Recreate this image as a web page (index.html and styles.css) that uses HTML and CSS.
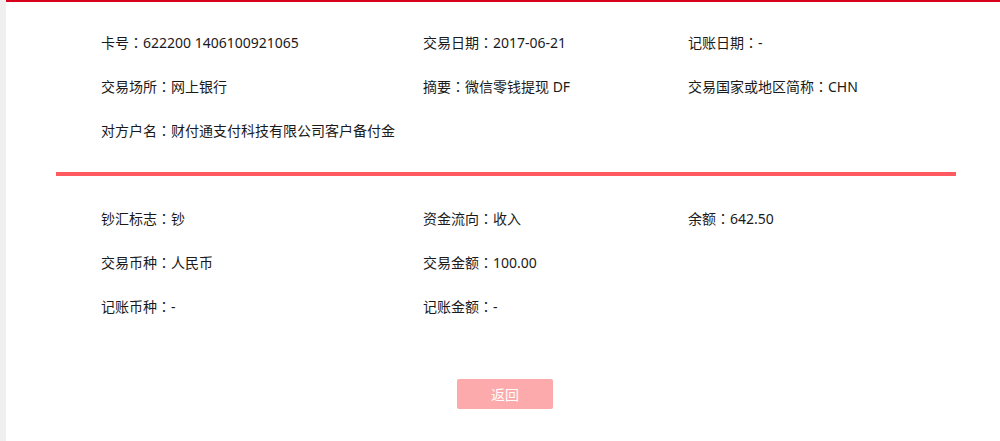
FILE: index.html
```html
<!DOCTYPE html>
<html lang="zh-CN">
<head>
  <meta charset="UTF-8" />
  <title>交易明细</title>
  <link rel="stylesheet" href="styles.css">
</head>
<body>
  <div class="page">
    <div class="info-grid">
      <div class="item">卡号<span class="colon" lang="zh-TW">：</span>622200 1406100921065</div>
      <div class="item">交易日期<span class="colon" lang="zh-TW">：</span>2017-06-21</div>
      <div class="item">记账日期<span class="colon" lang="zh-TW">：</span>-</div>

      <div class="item">交易场所<span class="colon" lang="zh-TW">：</span>网上银行</div>
      <div class="item">摘要<span class="colon" lang="zh-TW">：</span>微信零钱提现 DF</div>
      <div class="item">交易国家或地区简称<span class="colon" lang="zh-TW">：</span>CHN</div>

      <div class="item">对方户名<span class="colon" lang="zh-TW">：</span>财付通支付科技有限公司客户备付金</div>
    </div>

    <div class="divider"></div>

    <div class="info-grid">
      <div class="item">钞汇标志<span class="colon" lang="zh-TW">：</span>钞</div>
      <div class="item">资金流向<span class="colon" lang="zh-TW">：</span>收入</div>
      <div class="item">余额<span class="colon" lang="zh-TW">：</span>642.50</div>

      <div class="item">交易币种<span class="colon" lang="zh-TW">：</span>人民币</div>
      <div class="item">交易金额<span class="colon" lang="zh-TW">：</span>100.00</div>
      <div class="item"></div>

      <div class="item">记账币种<span class="colon" lang="zh-TW">：</span>-</div>
      <div class="item">记账金额<span class="colon" lang="zh-TW">：</span>-</div>
    </div>

    <div class="actions">
      <button class="back-btn">返回</button>
    </div>
  </div>
</body>
</html>
```

FILE: styles.css
```css
body, html {
  margin: 0;
  padding: 0;
  height: 100%;
  background-color: #f0f0f0;
  font-family: "Noto Sans", "Noto Sans CJK SC", sans-serif;
  font-size: 14px;
  color: #1a1a1a;
}

.page {
  margin-left: 6px;
  min-height: 100%;
  background-color: #fff;
  border-top: 2px solid #d9001b;
  box-sizing: border-box;
  padding-top: 18px;
}

.info-grid {
  display: grid;
  grid-template-columns: 322px 265px 1fr;
  padding-left: 95px;
}

.item {
  height: 44px;
  line-height: 44px;
  white-space: nowrap;
}

/* centred full-width colon, like the original UI font */
.colon {
  font-family: "Noto Sans CJK TC", sans-serif;
}

.divider {
  height: 4px;
  background-color: #ff5a5f;
  margin: 20px 44px 20px 50px;
}

.actions {
  display: flex;
  justify-content: center;
  padding-top: 51px;
  padding-left: 4px;
}

.back-btn {
  width: 96px;
  height: 30px;
  border: none;
  border-radius: 2px;
  background-color: #fcaaab;
  color: #fff;
  font-family: inherit;
  font-size: 14px;
  cursor: pointer;
}
```
